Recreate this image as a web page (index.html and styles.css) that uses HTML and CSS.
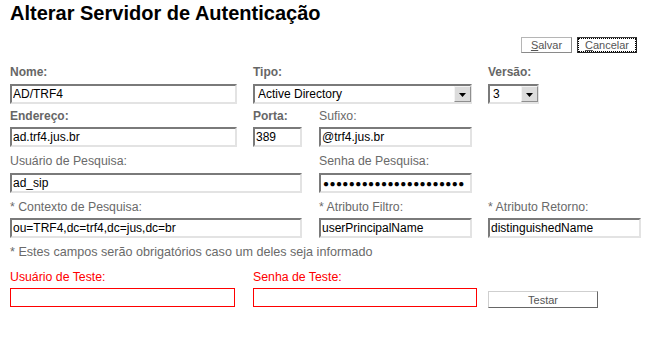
FILE: index.html
```html
<!DOCTYPE html>
<html lang="pt-BR">
<head>
<meta charset="utf-8">
<title>Alterar Servidor de Autenticação</title>
<link rel="stylesheet" href="styles.css">
</head>
<body>
<div class="page">
  <h1 class="title">Alterar Servidor de Autenticação</h1>

  <div class="actions">
    <button class="btn btn-top" type="button"><u>S</u>alvar</button>
    <button class="btn btn-top btn-default" type="button"><span class="focus-ring"><u>C</u>ancelar</span></button>
  </div>

  <div class="grid row1">
    <div class="field">
      <label class="lbl bold" for="nome">Nome:</label>
      <input id="nome" class="inp w227" type="text" value="AD/TRF4">
    </div>
    <div class="field span23">
      <label class="lbl bold" for="tipo">Tipo:</label>
      <div class="sel w219">
        <select id="tipo"><option>Active Directory</option></select>
        <span class="arrow"><svg width="7" height="4" viewBox="0 0 7 4"><path d="M0 0H7L3.5 4Z" fill="#000"/></svg></span>
      </div>
    </div>
    <div class="field col4">
      <label class="lbl bold" for="versao">Versão:</label>
      <div class="sel w51">
        <select id="versao"><option>3</option></select>
        <span class="arrow"><svg width="7" height="4" viewBox="0 0 7 4"><path d="M0 0H7L3.5 4Z" fill="#000"/></svg></span>
      </div>
    </div>
  </div>

  <div class="grid row2">
    <div class="field">
      <label class="lbl bold" for="end">Endereço:</label>
      <input id="end" class="inp w227" type="text" value="ad.trf4.jus.br">
    </div>
    <div class="field">
      <label class="lbl bold" for="porta">Porta:</label>
      <input id="porta" class="inp w49" type="text" value="389">
    </div>
    <div class="field">
      <label class="lbl" for="sufixo">Sufixo:</label>
      <input id="sufixo" class="inp w153" type="text" value="@trf4.jus.br">
    </div>
  </div>

  <div class="grid row3">
    <div class="field span12">
      <label class="lbl" for="usr">Usuário de Pesquisa:</label>
      <input id="usr" class="inp w292" type="text" value="ad_sip">
    </div>
    <div class="field">
      <label class="lbl" for="senha">Senha de Pesquisa:</label>
      <input id="senha" class="inp w153 dots" type="text" value="●●●●●●●●●●●●●●●●●●●●●●">
    </div>
  </div>

  <div class="grid row4">
    <div class="field span12">
      <label class="lbl" for="ctx">* Contexto de Pesquisa:</label>
      <input id="ctx" class="inp w292" type="text" value="ou=TRF4,dc=trf4,dc=jus,dc=br">
    </div>
    <div class="field">
      <label class="lbl" for="filtro">* Atributo Filtro:</label>
      <input id="filtro" class="inp w153" type="text" value="userPrincipalName">
    </div>
    <div class="field">
      <label class="lbl" for="ret">* Atributo Retorno:</label>
      <input id="ret" class="inp w153" type="text" value="distinguishedName">
    </div>
  </div>

  <p class="note">* Estes campos serão obrigatórios caso um deles seja informado</p>

  <div class="grid row5">
    <div class="field">
      <label class="lbl red" for="ut">Usuário de Teste:</label>
      <input id="ut" class="inp-red w225" type="text">
    </div>
    <div class="field span23">
      <label class="lbl red" for="st">Senha de Teste:</label>
      <input id="st" class="inp-red w224" type="password">
    </div>
    <div class="field col4">
      <button class="btn btn-test" type="button">Testar</button>
    </div>
  </div>
</div>
</body>
</html>
```

FILE: styles.css
```css
html, body {
  margin: 0;
  padding: 0;
  background: #fff;
}

body {
  font-family: "Liberation Sans", Arial, sans-serif;
  font-size: 12px;
  color: #000;
}

.page {
  width: 657px;
  padding: 0 10px;
  box-sizing: border-box;
}

.title {
  margin: 2px 0 0;
  font-size: 20px;
  line-height: 23px;
  font-weight: bold;
  color: #000;
}

.actions {
  display: flex;
  justify-content: flex-end;
  gap: 5px;
  margin-top: 12px;
  padding-right: 10px;
}

.btn {
  font-family: "Liberation Sans", Arial, sans-serif;
  font-size: 11px;
  color: #555;
  background: #fff;
  margin: 0;
  padding: 0;
  cursor: default;
}

.btn-top {
  height: 16px;
  line-height: 14px;
  width: 51px;
  border: 1px solid #b5b5b5;
  border-right-color: #8a8a8a;
  border-bottom-color: #8a8a8a;
}

.btn-default {
  width: 60px;
  border-color: #3a3a3a;
  border-right-color: #222;
  border-bottom-color: #222;
  padding: 1px;
}

.focus-ring {
  display: block;
  height: 12px;
  line-height: 12px;
  outline: 1px dotted #000;
  color: #555;
}

.grid {
  display: grid;
  grid-template-columns: 243px 66px 169px 152px;
  align-items: start;
}

.field {
  display: flex;
  flex-direction: column;
  align-items: flex-start;
}

.span12 { grid-column: 1 / span 2; }
.span23 { grid-column: 2 / span 2; }
.col4 { grid-column: 4; }

.lbl {
  display: block;
  height: 15px;
  line-height: 15px;
  font-size: 12.3px;
  color: #6a6a6a;
  white-space: nowrap;
}

.bold { font-weight: bold; color: #666; font-size: 12px; }
.red { color: #ff0000; }

.row1 { margin-top: 12px; }
.row1 .lbl { margin-bottom: 4px; }

.row2 { margin-top: 5px; }
.row2 .lbl { margin-bottom: 3px; }

.row3 { margin-top: 7px; }
.row3 .lbl { margin-bottom: 4px; }

.row4 { margin-top: 7px; }
.row4 .lbl { margin-bottom: 3px; }

.row5 { margin-top: 10px; }
.row5 .lbl { margin-bottom: 3px; }

.inp, .sel select {
  box-sizing: border-box;
  height: 20px;
  margin: 0;
  padding: 0 1px;
  font-family: "Liberation Sans", Arial, sans-serif;
  font-size: 12px;
  color: #000;
  background: #fff;
  border-style: solid;
  border-width: 2px;
  border-color: #7a7a7a #e3e3e3 #e3e3e3 #7a7a7a;
  outline: none;
  border-radius: 0;
}

.dots {
  font-size: 10px;
  letter-spacing: 0.4px;
  padding-left: 2px;
}

.inp-red {
  box-sizing: border-box;
  height: 19px;
  margin: 0;
  padding: 0 2px;
  border: 1px solid #ff0000;
  background: #fff;
  outline: none;
}

.w49 { width: 49px; }
.w51 { width: 51px; }
.w153 { width: 153px; }
.w219 { width: 219px; }
.w224 { width: 224px; }
.w225 { width: 225px; }
.w227 { width: 227px; }
.w292 { width: 292px; }

.sel {
  position: relative;
  height: 20px;
}

.sel select {
  width: 100%;
  -webkit-appearance: none;
  appearance: none;
  padding: 0 0 0 3px;
}

.arrow {
  position: absolute;
  top: 2px;
  right: 1px;
  width: 17px;
  height: 16px;
  box-sizing: border-box;
  background: #dcdcdc;
  border: 1px solid;
  border-color: #f4f4f4 #8f8f8f #8f8f8f #f4f4f4;
  display: flex;
  align-items: center;
  justify-content: center;
  pointer-events: none;
}

.arrow svg {
  display: block;
  margin-top: 1px;
}

.note {
  margin: 7px 0 0;
  height: 15px;
  line-height: 15px;
  font-size: 12.6px;
  color: #6a6a6a;
}

.btn-test {
  margin-top: 21px;
  width: 110px;
  height: 17px;
  line-height: 14px;
  border: 1px solid #cfcfcf;
  border-right-color: #666;
  border-bottom-color: #666;
  color: #555;
}
```
